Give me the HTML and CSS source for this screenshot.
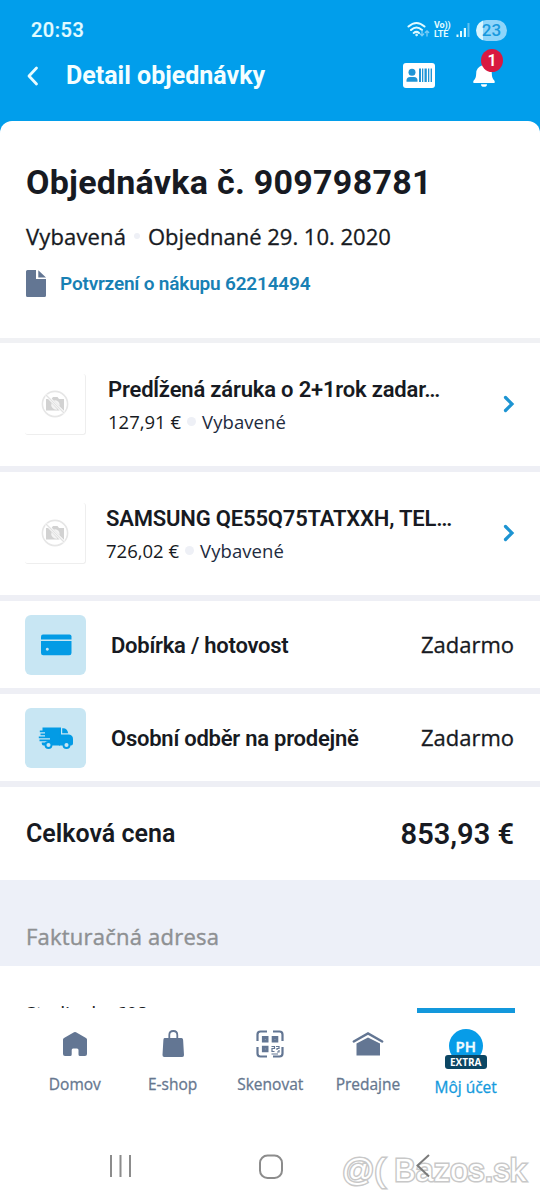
FILE: index.html
```html
<!DOCTYPE html>
<html lang="sk">
<head>
<meta charset="utf-8">
<title>Detail objednávky</title>
<link rel="stylesheet" href="styles.css">
</head>
<body>
<div class="screen">
  <header class="top">
    <div class="status">
      <span class="clock">20:53</span>
      <div class="status-icons">
        <svg class="wifi" width="24" height="18" viewBox="0 0 24 18" fill="none" stroke="#e2fbff" stroke-width="2" stroke-linecap="round">
          <path d="M1.500 5.500Q9.500-1.500 17.500 5.500M4 9Q9.500 4 15 9M6.700 12Q9.500 9.800 12 12"/><circle cx="9.500" cy="14" r=".8" fill="#e2fbff" stroke-width="1"/>
          <path d="M15 9.500v5M13.300 13L15 14.800 16.700 13M20 15v-5M18.300 11.500L20 9.800 21.700 11.500" stroke="#7ccdf6" stroke-width="1.300"/>
        </svg>
        <span class="volte"><span>Vo))</span><span>LTE</span></span>
        <svg class="signal" width="14" height="16" viewBox="0 0 14 16"><path d="M.5 12.500h2V15h-2zM4 9h2v6H4zM7.800 6h2.200v9H7.800z" fill="#e2fbff"/><path d="M11.500 1h2v14h-2z" fill="#61c0f0"/></svg>
        <span class="battery">23</span>
      </div>
    </div>
    <div class="bar">
      <svg class="back" width="14" height="20" viewBox="0 0 14 20" fill="none" stroke="#e8fcff" stroke-width="2.800" stroke-linecap="round" stroke-linejoin="round"><path d="M10.500 2L3 10l7.500 8"/></svg>
      <h1 class="bar-title">Detail objednávky</h1>
      <svg class="card-icon" width="32" height="25" viewBox="0 0 32 25">
        <rect width="32" height="25" rx="3" fill="#fff"/>
        <g fill="#2095d6"><circle cx="9" cy="9.300" r="3.500"/><path d="M3.500 18.800v-1.300q0-3.600 3.500-3.600h4q3.500 0 3.500 3.600v1.300z"/><path d="M16 5.500h2v13.500h-2zM19 5.500h1.300v13.500H19zM21.500 5.500h2.300v13.500h-2.300zM25 5.500h1.300v13.500H25zM27.600 5.500H29v13.500h-1.400z"/></g>
      </svg>
      <div class="bell">
        <svg width="22" height="25" viewBox="0 0 22 25" fill="#fff"><path d="M11 .8a1.500 1.500 0 0 1 1.500 1.500Q18.600 4 18.800 10.500q.1 5 2.500 7.100.6.600.4 1.800-.2.600-1 .6H1.300q-.8 0-1-.6-.2-1.200.4-1.800Q3.100 15.500 3.200 10.500 3.400 4 9.500 2.300A1.500 1.500 0 0 1 11 .8zM8 21.200h6a3 2.600 0 0 1-6 0z"/></svg>
        <span class="badge">1</span>
      </div>
    </div>
  </header>

  <main class="sheet">
    <section class="summary">
      <h2 class="order">Objednávka č. 909798781</h2>
      <p class="state"><span class="state-a">Vybavená</span><i class="dot small"></i><span class="state-b">Objednané 29. 10. 2020</span></p>
      <p class="receipt">
        <svg width="20" height="27" viewBox="0 0 20 27" fill="#637693"><path d="M1.500 0H10v9h10v16.500q0 1.500-1.500 1.500h-17Q0 27 0 25.500v-24Q0 0 1.500 0zM12.300.3L20 7.500h-7.700z"/></svg>
        <a>Potvrzení o nákupu 62214494</a>
      </p>
    </section>

    <section class="item">
      <div class="thumb"><svg width="28" height="28" viewBox="0 0 28 28"><circle cx="14" cy="14" r="12.600" fill="none" stroke="#e6e6e6" stroke-width="1.600"/><path d="M5 9h3.500L19 20.500H5zM10.500 9L12 7h4.500L18 9h5v12L10.500 9z" fill="#d2d2d2"/><path d="M10.500 13a5 5 0 0 0 6 6.500z" fill="#f4f4f4"/><path d="M13 10.500a4.500 4.500 0 0 1 5.500 5.500z" fill="#f4f4f4"/><path d="M5 5l18 18" stroke="#fff" stroke-width="2.600"/><path d="M5 5l18 18" stroke="#e2e2e2" stroke-width="1.200"/></svg></div>
      <div class="item-text first"><h3>Predĺžená záruka o 2+1rok zadar…</h3><p><span>127,91 €</span><i class="dot"></i><span class="navy">Vybavené</span></p></div>
      <svg class="chev" width="12" height="18" viewBox="0 0 12 18" fill="none" stroke="#1d94d2" stroke-width="3.200"><path d="M2.500 2.500L9 9l-6.500 6.500" stroke-linecap="round"/></svg>
    </section>

    <section class="item">
      <div class="thumb"><svg width="28" height="28" viewBox="0 0 28 28"><circle cx="14" cy="14" r="12.600" fill="none" stroke="#e6e6e6" stroke-width="1.600"/><path d="M5 9h3.500L19 20.500H5zM10.500 9L12 7h4.500L18 9h5v12L10.500 9z" fill="#d2d2d2"/><path d="M10.500 13a5 5 0 0 0 6 6.500z" fill="#f4f4f4"/><path d="M13 10.500a4.500 4.500 0 0 1 5.500 5.500z" fill="#f4f4f4"/><path d="M5 5l18 18" stroke="#fff" stroke-width="2.600"/><path d="M5 5l18 18" stroke="#e2e2e2" stroke-width="1.200"/></svg></div>
      <div class="item-text second"><h3>SAMSUNG QE55Q75TATXXH, TEL…</h3><p><span>726,02 €</span><i class="dot"></i><span class="navy">Vybavené</span></p></div>
      <svg class="chev" width="12" height="18" viewBox="0 0 12 18" fill="none" stroke="#1d94d2" stroke-width="3.200"><path d="M2.500 2.500L9 9l-6.500 6.500" stroke-linecap="round"/></svg>
    </section>

    <section class="service">
      <div class="tile"><svg width="36" height="28" viewBox="0 0 36 28" fill="#039be5"><path d="M3 8.400V5.500q0-2 2-2h26.500q2 0 2 2v2.900H3z"/><path fill-rule="evenodd" d="M3 10h30.500V22q0 2.300-2.300 2.300H5.300Q3 24.300 3 22zM9.300 16.800a1.500 1.500 0 1 0 .01 0z"/></svg></div>
      <span class="service-name pay">Dobírka / hotovost</span><span class="free">Zadarmo</span>
    </section>

    <section class="service">
      <div class="tile"><svg width="36" height="28" viewBox="0 0 36 28" fill="#039be5">
        <path d="M4.500 3.500H22v18H5.500q-1.800 0-1.800-3H10v-1.300H1.500v-1.700H12v-1.300H.8v-1.700H7v-1.300H2.500V9.500H7V8.200H1.800V6.500h2.700z"/>
        <path d="M24.200 4.200h1q4 0 5 5h-6z"/><path d="M22 3.500h1v7h8q4 .8 4 4.500v4.500q0 2-2 2H21z"/>
        <circle cx="10.500" cy="21" r="3" fill="#c8e6f3" stroke="#039be5" stroke-width="1.900"/><circle cx="28.500" cy="21" r="3" fill="#c8e6f3" stroke="#039be5" stroke-width="1.900"/>
      </svg></div>
      <span class="service-name ship">Osobní odběr na prodejně</span><span class="free">Zadarmo</span>
    </section>

    <section class="total"><span class="total-label">Celková cena</span><span class="total-sum">853,93 €</span></section>
    <h2 class="group"><span>Fakturačná adresa</span></h2>
    <section class="address">Studienka 608</section>
  </main>

  <nav class="tabs">
    <a class="tab"><svg width="26" height="28" viewBox="0 0 26 28" fill="#637693"><path d="M13 2q.5 0 1 .3L24 8q1 .6 1 1.600V24q0 2-2 2h-5q-1.500 0-1.500-1.500V20q0-1.500-1.500-1.500h-4Q9.700 18.500 9.700 20v4.500Q9.700 26 8.200 26H3q-2 0-2-2V9.600Q1 8.600 2 8L12 2.300q.5-.3 1-.3z"/></svg><span class="t1">Domov</span></a>
    <a class="tab"><svg width="26" height="28" viewBox="0 0 26 28" fill="#637693"><path d="M4.500 8h17q1.500 0 1.600 1.700L24 25q.1 2-1.800 2H4.300q-1.900 0-1.800-2l.9-15.300Q3.500 8 4.500 8z"/><path d="M9.300 9V5q0-4 4-4t4 4v4" fill="none" stroke="#637693" stroke-width="1.800"/></svg><span class="t2">E-shop</span></a>
    <a class="tab"><svg width="28" height="28" viewBox="0 0 28 28" fill="none" stroke="#637693" stroke-width="2.200"><path d="M1.500 11V4.500q0-3 3-3H11M17 1.500h6.500q3 0 3 3V11M1.500 17v6.500q0 3 3 3H11M17 26.500h6.500q3 0 3-3V17"/><path d="M7.400 7.400h3.600v3.600H7.400zM17.200 7.400h3.600v3.600h-3.600zM7.400 17.200h3.600v3.600H7.400z" stroke-width="3"/><path d="M15.500 16.500h3v2h-2.500v3h2.500M20 16.500h3v2h-2v1.500M21 22h2v-2M15.500 24H22" stroke-width="1.200"/></svg><span class="t3">Skenovat</span></a>
    <a class="tab"><svg width="32" height="28" viewBox="0 0 32 28" fill="#637693"><path d="M4.500 13.500L16 7.500l12 6V25.500H4.500z"/><path d="M1.800 11.500L16 3.500l14.200 8" fill="none" stroke="#637693" stroke-width="2.500" stroke-linecap="round"/></svg><span class="t4">Predajne</span></a>
    <a class="tab active"><div class="avatar"><span class="initials">PH</span><span class="extra">EXTRA</span></div><span class="t5">Môj účet</span></a>
  </nav>

  <footer class="system">
    <svg class="recents" width="24" height="24" viewBox="0 0 24 24" stroke="#8c8c8c" stroke-width="2"><path d="M2 1v22M11.500 1v22M21 1v22"/></svg>
    <svg class="home" width="26" height="26" viewBox="0 0 26 26" fill="none" stroke="#8c8c8c" stroke-width="2"><rect x="2" y="1.500" width="22" height="22.500" rx="7.500"/></svg>
    <div class="back-key">
      <span class="mark"><span class="mark-at">@(</span><span class="mark-name">Bazos.sk</span></span>
      <svg class="back-arrow" width="14" height="24" viewBox="0 0 14 24" fill="none" stroke="#7b7b7b" stroke-width="2"><path d="M13 1L1.500 11.500 13 22.500"/></svg>
    </div>
  </footer>
</div>
</body>
</html>
```
FILE: styles.css
```css
* { box-sizing: border-box; }
body, h1, h2, h3, p { margin: 0; }
body { width: 540px; height: 1200px; overflow: hidden; background: #fff; color: #171a22; font-family: "Open Sans", "Noto Sans", sans-serif; }
svg { display: block; flex: none; }
span, a { white-space: nowrap; }
.screen { display: flex; flex-direction: column; height: 1200px; background: #019eeb; }

.top { height: 121px; flex: none; padding: 16px 33px 0 26px; }
.status { display: flex; justify-content: space-between; height: 28px; align-items: center; padding-left: 5px; }
.clock { font: 500 20px/28px Roboto, sans-serif; letter-spacing: .5px; color: #e2fbff; -webkit-text-stroke: .2px; }
.status-icons { display: flex; align-items: center; }
.volte { display: flex; flex-direction: column; margin-left: 3px; width: 16px; font: 700 9px/9px Roboto, sans-serif; color: #e2fbff; letter-spacing: -.1px; }
.signal { margin-left: 6px; }
.battery { margin-left: 6px; width: 31px; height: 21px; border-radius: 11px; background: linear-gradient(90deg, #d7f5ff 23%, #8fd5fa 23%); font: 500 17px/21px Roboto, sans-serif; text-align: center; color: #1799dd; }
.bar { display: flex; align-items: center; height: 63px; }
.back, .card-icon { flex: none; }
.bar-title { flex: none; margin-left: 26px; width: 327px; padding-top: 1px; font: 700 25px/30px Roboto, sans-serif; color: #f4feff; }
.card-icon { margin-left: 10px; }
.bell { position: relative; margin-left: 38px; }
.badge { position: absolute; left: 8px; top: -14px; width: 22px; height: 23px; border-radius: 50%; background: #d81940; color: #fff; font: 600 16px/23px Roboto, sans-serif; text-align: center; }

.sheet { display: flex; flex-direction: column; height: 887px; flex: none; overflow: hidden; border-radius: 12px 12px 0 0; background: #fff; }
.sheet > * { flex: none; }
.summary { height: 222px; padding: 41px 26px 0; border-bottom: 5px solid #f0f1f4; }
.order { font: 700 34px/40px Roboto, sans-serif; letter-spacing: .27px; }
.state { display: flex; align-items: center; margin-top: 19px; height: 30px; font-size: 22px; line-height: 30px; -webkit-text-stroke: .3px; }
.state-a { width: 100px; letter-spacing: .15px; }
.dot { width: 9px; height: 9px; border-radius: 50%; background: #eef0f6; margin: 0 6px; }
.dot.small { width: 6px; height: 6px; margin: 0 8px; }
.receipt { display: flex; align-items: center; gap: 14px; margin-top: 19px; height: 27px; font: 600 19px/27px Roboto, sans-serif; letter-spacing: -.19px; color: #1880b4; }

.item { display: flex; align-items: center; height: 129px; padding: 0 25px; border-bottom: 6px solid #eeeff5; }
.thumb { display: flex; align-items: center; justify-content: center; width: 61px; height: 61px; border-right: 1px solid #eee; border-bottom: 1px solid #eee; border-radius: 3px; }
.item-text { width: 370px; height: 64px; margin-left: 22px; }
.item-text.second { margin-left: 20px; width: 372px; }
.item-text h3 { padding-top: 1px; font: 600 22px/32px Roboto, sans-serif; letter-spacing: -.18px; white-space: nowrap; }
.item-text p { display: flex; align-items: center; height: 28px; margin-top: 2px; font-size: 18.500px; line-height: 28px; }
.item-text .navy { color: #1e2b40; letter-spacing: .08px; }
.chev { margin: -2px 0 0 auto; }

.service { display: flex; align-items: center; height: 93px; padding: 0 26px 0 25px; border-bottom: 6px solid #eeeff5; }
.tile { display: flex; align-items: center; justify-content: center; width: 61px; height: 60px; border-radius: 6px; background: #c8e6f3; }
.service-name { margin-left: 25px; padding-top: 2px; font: 600 22px/30px Roboto, sans-serif; letter-spacing: -.24px; }
.free { margin-left: auto; padding-bottom: 2px; font-size: 22px; line-height: 30px; -webkit-text-stroke: .3px; }
.total { display: flex; align-items: center; justify-content: space-between; height: 93px; padding: 0 26px; font: 600 25px/34px Roboto, sans-serif; }
.total-sum { font-size: 29px; }
.group { display: flex; align-items: flex-end; height: 86px; padding: 0 26px 15px; background: #edf0f8; color: #8e9093; font-size: 22px; line-height: 30px; font-weight: 400; letter-spacing: .22px; -webkit-text-stroke: .4px; }
.address { height: 42px; padding: 34px 26px 0; overflow: hidden; font-size: 18px; line-height: 26px; letter-spacing: .2px; -webkit-text-stroke: .2px; }

.tabs { display: flex; height: 102px; flex: none; padding: 0 25.500px 0 26px; background: #fff; }
.tab { display: flex; flex: 1; flex-direction: column; align-items: center; padding-top: 22px; font-size: 15.500px; line-height: 20px; color: #66778f; -webkit-text-stroke: .3px; }
.tab > span { margin-top: 16px; }
.tab.active { border-top: 5px solid #1398dc; padding-top: 16px; color: #149add; }
.tab.active > span { margin-top: 8px; }
.avatar { position: relative; width: 42px; height: 40px; display: flex; justify-content: center; }
.initials { width: 34px; height: 34px; border-radius: 50%; background: #079ce8; color: #f2fcff; font-size: 15px; font-weight: 600; line-height: 34px; text-align: center; -webkit-text-stroke: .4px; }
.extra { position: absolute; left: 0; bottom: 0; width: 42px; height: 14px; border-radius: 3px; background: #0c4663; color: #fff; font-size: 10px; font-weight: 700; line-height: 14px; text-align: center; -webkit-text-stroke: 0; }

.system { display: flex; align-items: flex-start; height: 90px; padding: 44px 0 0 109px; background: #fff; }
.home { margin-left: 125px; }
.back-key { position: relative; margin-left: 132px; }
.back-arrow { position: relative; }
.mark { position: absolute; left: -74px; top: -2px; display: flex; font: 32px/36px "Liberation Sans", Arial, sans-serif; color: #fff; -webkit-text-stroke: 3px #c8c8c8; paint-order: stroke fill; }
.mark-name { margin-left: 9px; letter-spacing: .3px; }
```
